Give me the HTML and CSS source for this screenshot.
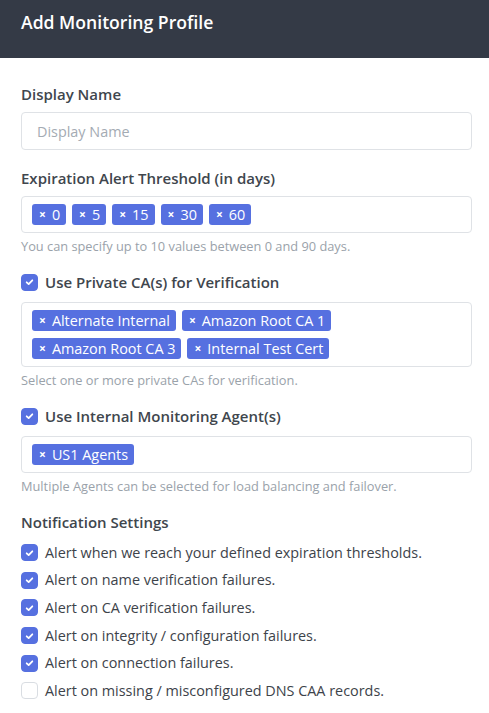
FILE: index.html
```html
<!DOCTYPE html>
<html>
<head>
<meta charset="utf-8">
<link rel="stylesheet" href="styles.css">
</head>
<body>
<div class="modal">
  <div class="header"><h1 class="title">Add Monitoring Profile</h1></div>
  <div class="body">
    <div class="group">
      <label class="label">Display Name</label>
      <div class="input"><span class="placeholder">Display Name</span></div>
    </div>
    <div class="group">
      <label class="label">Expiration Alert Threshold (in days)</label>
      <div class="tags">
        <span class="tag"><span class="x">×</span>0</span>
        <span class="tag"><span class="x">×</span>5</span>
        <span class="tag"><span class="x">×</span>15</span>
        <span class="tag"><span class="x">×</span>30</span>
        <span class="tag"><span class="x">×</span>60</span>
      </div>
      <div class="help">You can specify up to 10 values between 0 and 90 days.</div>
    </div>
    <div class="group">
      <div class="check label"><span class="box on"><svg viewBox="0 0 16 16"><path d="M5 8.3l2.1 2 3.9-4.1"/></svg></span>Use Private CA(s) for Verification</div>
      <div class="tags">
        <span class="tag"><span class="x">×</span>Alternate Internal</span>
        <span class="tag"><span class="x">×</span>Amazon Root CA 1</span>
        <span class="tag"><span class="x">×</span>Amazon Root CA 3</span>
        <span class="tag"><span class="x">×</span>Internal Test Cert</span>
      </div>
      <div class="help">Select one or more private CAs for verification.</div>
    </div>
    <div class="group">
      <div class="check label"><span class="box on"><svg viewBox="0 0 16 16"><path d="M5 8.3l2.1 2 3.9-4.1"/></svg></span>Use Internal Monitoring Agent(s)</div>
      <div class="tags">
        <span class="tag"><span class="x">×</span>US1 Agents</span>
      </div>
      <div class="help">Multiple Agents can be selected for load balancing and failover.</div>
    </div>
    <div class="group notif">
      <label class="label">Notification Settings</label>
      <div class="list">
        <div class="check item"><span class="box on"><svg viewBox="0 0 16 16"><path d="M5 8.3l2.1 2 3.9-4.1"/></svg></span>Alert when we reach your defined expiration thresholds.</div>
        <div class="check item"><span class="box on"><svg viewBox="0 0 16 16"><path d="M5 8.3l2.1 2 3.9-4.1"/></svg></span>Alert on name verification failures.</div>
        <div class="check item"><span class="box on"><svg viewBox="0 0 16 16"><path d="M5 8.3l2.1 2 3.9-4.1"/></svg></span>Alert on CA verification failures.</div>
        <div class="check item"><span class="box on"><svg viewBox="0 0 16 16"><path d="M5 8.3l2.1 2 3.9-4.1"/></svg></span>Alert on integrity / configuration failures.</div>
        <div class="check item"><span class="box on"><svg viewBox="0 0 16 16"><path d="M5 8.3l2.1 2 3.9-4.1"/></svg></span>Alert on connection failures.</div>
        <div class="check item"><span class="box"></span>Alert on missing / misconfigured DNS CAA records.</div>
      </div>
    </div>
  </div>
</div>
</body>
</html>
```
FILE: styles.css
```css
html, body { margin: 0; padding: 0; background: #fff; }
body { font-family: "Open Sans", "Noto Sans", sans-serif; color: #3d434a; }
.modal { width: 489px; }
.header { background: #343a46; height: 58px; display: flex; align-items: center; padding: 0 21px; box-sizing: border-box; }
.title { margin: 0; color: #fff; font-size: 17.6px; font-weight: 600; line-height: 24px; padding-bottom: 14px; }
.body { padding: 26px 17px 0 21px; }
.group { margin-bottom: 18px; }
.label { display: block; font-size: 15px; font-weight: 600; line-height: 20px; color: #40464d; margin-bottom: 8px; }
.check.label { display: flex; margin-bottom: 10px; }
.input { height: 38px; box-sizing: border-box; border: 1px solid #dfe2e6; border-radius: 4px; padding: 0 15px; display: flex; align-items: center; }
.placeholder { font-size: 14.4px; color: #a4abb3; }
.tags { border: 1px solid #dfe2e6; border-radius: 4px; padding: 7px 10px; display: flex; flex-wrap: wrap; column-gap: 6px; row-gap: 7px; }
.tag { background: #5670e0; color: #fff; font-size: 14.4px; line-height: 21px; height: 21px; border-radius: 3px; padding: 0 6px 0 7px; display: inline-flex; align-items: center; }
.tag .x { font-size: 12px; font-weight: 700; margin-right: 6px; }
.help { font-size: 12.8px; color: #9aa2aa; line-height: 16px; margin-top: 5px; }
.check { display: flex; align-items: center; }
.box { width: 17px; height: 17px; box-sizing: border-box; border: 1px solid #d9dde2; border-radius: 4px; margin-right: 7px; flex: none; display: inline-flex; align-items: center; justify-content: center; }
.box.on { background: #5670e0; border-color: #5670e0; }
.box svg { width: 16px; height: 16px; }
.box svg path { fill: none; stroke: #fff; stroke-width: 1.9; stroke-linecap: round; stroke-linejoin: round; }
.notif .label { margin-bottom: 7px; }
.list { display: flex; flex-direction: column; }
.item { font-size: 14.4px; line-height: 20px; height: 27.6px; color: #3d434a; }
```
